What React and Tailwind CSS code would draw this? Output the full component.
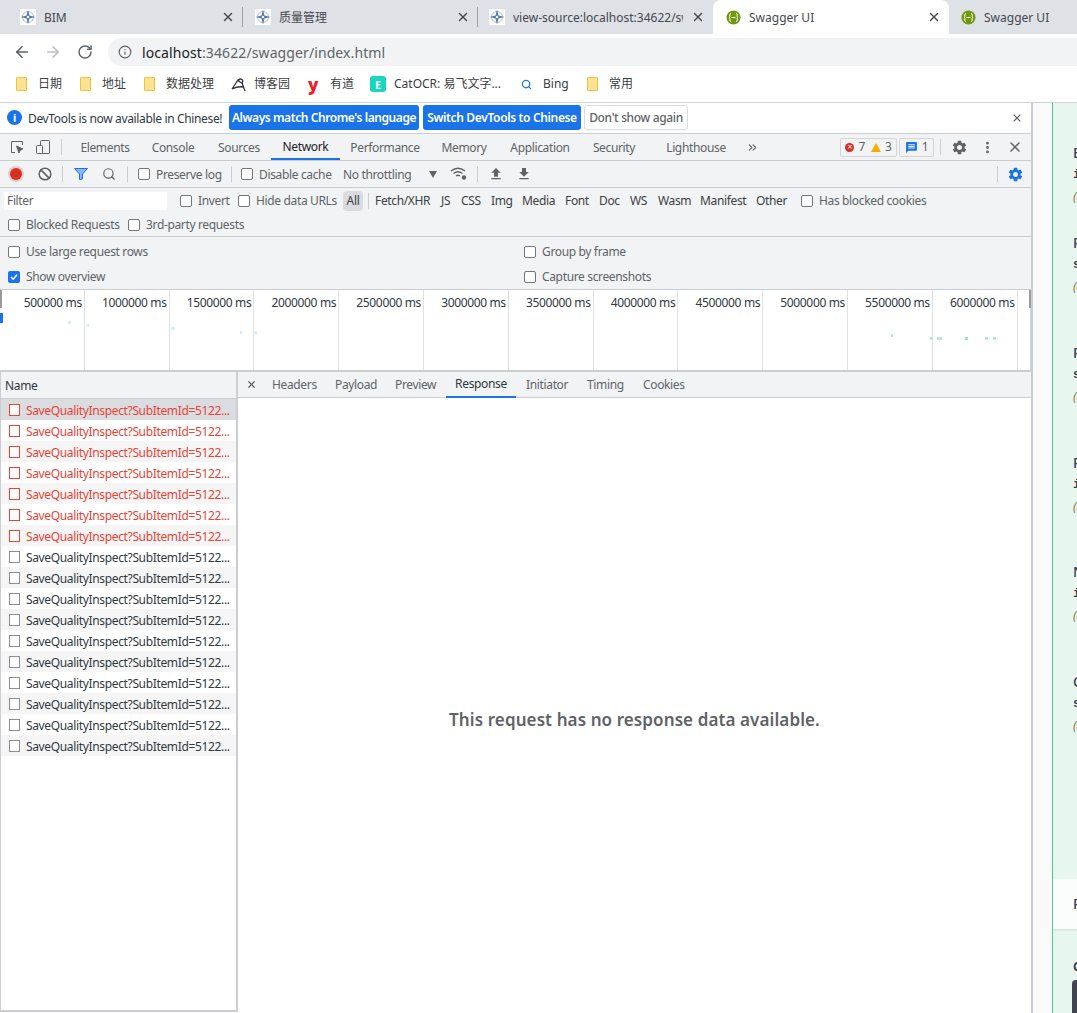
import { ArrowLeft, ArrowRight, RotateCw, Info, X, Search, Ban, ChevronsRight, EllipsisVertical } from "lucide-react";
import { MdSettings, MdFileUpload, MdFileDownload, MdMessage } from "react-icons/md";

const sans = "font-['Noto_Sans','Noto_Sans_CJK_SC',sans-serif]";

function BimIcon() {
  return (
    <svg width="16" height="16" viewBox="0 0 16 16" className="shrink-0 bg-white">
      <circle cx="8" cy="8" r="5.5" fill="none" stroke="#a9b6cc" strokeWidth="1" />
      <path d="M8 0.5 L9.5 6.5 L15.5 8 L9.5 9.5 L8 15.5 L6.5 9.5 L0.5 8 L6.5 6.5 Z" fill="#5b7cae" />
      <circle cx="8" cy="8" r="1.2" fill="#fff" />
    </svg>
  );
}

function SwaggerIcon() {
  return (
    <svg width="15" height="15" viewBox="0 0 15 15" className="shrink-0">
      <circle cx="7.5" cy="7.5" r="7" fill="#6f9a0e" />
      <path d="M5 3.5 Q3.8 3.5 3.8 5 V6.6 Q3.8 7.5 3 7.5 Q3.8 7.5 3.8 8.4 V10 Q3.8 11.5 5 11.5 M10 3.5 Q11.2 3.5 11.2 5 V6.6 Q11.2 7.5 12 7.5 Q11.2 7.5 11.2 8.4 V10 Q11.2 11.5 10 11.5 M5.5 7.5 H9.5" fill="none" stroke="#fff" strokeWidth="1" />
    </svg>
  );
}

function Tab({ icon, label, className, textClass = "w-[178px]", active }) {
  return (
    <div className={`flex h-[34px] shrink-0 items-center ${active ? "rounded-t-lg bg-white" : ""} ${className}`}>
      {icon}
      <span className={`overflow-hidden pt-px text-xs tracking-normal text-[#45494e] ${textClass}`}>{label}</span>
    </div>
  );
}

function TabStrip() {
  return (
    <div className="flex h-[34px] shrink-0 bg-[#dee1e6]">
      <Tab className="w-[243px] gap-2 pl-5" icon={<BimIcon />} label="BIM" />
      <X size={14} strokeWidth={2.4} className="ml-[-22px] mt-[10px] shrink-0 text-[#45494e]" />
      <div className="ml-[7px] mt-[7px] h-5 w-px shrink-0 bg-[#9aa0a6]" />
      <Tab className="ml-[12px] w-[201px] gap-2" textClass="w-[170px]" icon={<BimIcon />} label="质量管理" />
      <X size={14} strokeWidth={2.4} className="mt-[10px] shrink-0 text-[#45494e]" />
      <div className="ml-[7px] mt-[7px] h-5 w-px shrink-0 bg-[#9aa0a6]" />
      <Tab className="ml-[11px] w-[202px] gap-2" textClass="w-[170px]" icon={<BimIcon />} label="view-source:localhost:34622/swagger/index.html" />
      <X size={14} strokeWidth={2.4} className="mt-[10px] shrink-0 text-[#45494e]" />
      <Tab active className="ml-[8px] w-[236px] gap-2 pl-[13px]" textClass="w-[160px]" icon={<SwaggerIcon />} label="Swagger UI" />
      <X size={14} strokeWidth={2.4} className="ml-[-22px] mt-[10px] shrink-0 text-[#45494e]" />
      <Tab className="ml-[20px] w-[110px] gap-2" textClass="w-[80px]" icon={<SwaggerIcon />} label="Swagger UI" />
    </div>
  );
}

function Omnibox() {
  return (
    <div className="flex h-[34px] shrink-0 items-center bg-white pt-[2px]">
      <ArrowLeft size={18} strokeWidth={2.2} className="ml-[13px] text-[#5f6368]" />
      <ArrowRight size={18} strokeWidth={2.2} className="ml-[13px] text-[#bdc1c6]" />
      <RotateCw size={16} strokeWidth={2.2} className="ml-[15px] text-[#5f6368]" />
      <div className="ml-[15px] flex h-7 w-[970px] items-center rounded-l-[14px] bg-[#f1f3f4] pl-[10px]">
        <Info size={14} strokeWidth={2} className="text-[#5f6368]" />
        <span className="ml-[10px] text-[14px] tracking-[0.1px] text-[#202124]">localhost<span className="text-[#5f6368]">:34622/swagger/index.html</span></span>
      </div>
    </div>
  );
}

function Folder() {
  return <div className="h-[14px] w-[11px] shrink-0 rounded-[1px] border border-[#f0c040] bg-[#fde293]" />;
}

function Bookmark({ icon, label, className }) {
  return (
    <div className={`flex shrink-0 items-center ${className}`}>
      {icon}
      <span className="text-xs tracking-normal text-[#3c4043]">{label}</span>
    </div>
  );
}

function Bookmarks() {
  return (
    <div className="flex h-[35px] shrink-0 items-center border-b border-[#d0d3d7] bg-white pb-[2px]">
      <Bookmark className="ml-4 w-[64px] gap-[11px]" icon={<Folder />} label="日期" />
      <Bookmark className="w-[64px] gap-[11px]" icon={<Folder />} label="地址" />
      <Bookmark className="w-[87px] gap-[11px]" icon={<Folder />} label="数据处理" />
      <Bookmark
        className="w-[77px] gap-[8px]"
        icon={
          <svg width="15" height="15" viewBox="0 0 15 15" className="shrink-0">
            <path d="M1 12 L5 6 Q7 2 10 2 Q13 3 11 6 L14 14 M1 12 Q7 9 12 10 M7 3 Q9 6 12 6" fill="none" stroke="#333" strokeWidth="1.3" />
          </svg>
        }
        label="博客园"
      />
      <Bookmark className="w-[62px] gap-[11px]" icon={<span className="w-[11px] text-[17px] font-black leading-none text-[#e8202a]">y</span>} label="有道" />
      <Bookmark
        className="w-[151px] gap-2"
        icon={<span className="flex h-4 w-4 shrink-0 items-center justify-center rounded-[3px] bg-[#17d6c0] text-[11px] font-bold leading-none text-white">E</span>}
        label="CatOCR: 易飞文字..."
      />
      <Bookmark className="w-[66px] gap-[11px]" icon={<Search size={11} strokeWidth={3} className="shrink-0 text-[#2a7bd0]" />} label="Bing" />
      <Bookmark className="gap-[11px]" icon={<Folder />} label="常用" />
    </div>
  );
}

function InfoBar() {
  return (
    <div className="flex h-[31px] shrink-0 items-center border-b border-[#cacdd1] bg-white pb-px">
      <div className="ml-[7px] flex h-[15px] w-[15px] items-center justify-center rounded-full bg-[#1a73e8] text-[11px] font-bold leading-none text-white">i</div>
      <span className="ml-[6px] w-[201px] pt-[2px] text-xs text-[#303942]">DevTools is now available in Chinese!</span>
      <div className="flex h-[25px] w-[190px] items-center justify-center rounded-[3px] bg-[#1a73e8] pt-px text-xs font-semibold tracking-[-0.42px] text-white">Always match Chrome's language</div>
      <div className="ml-1 flex h-[25px] w-[158px] items-center justify-center rounded-[3px] bg-[#1a73e8] pt-px text-xs font-semibold text-white">Switch DevTools to Chinese</div>
      <div className="ml-[3px] flex h-[25px] w-[104px] items-center justify-center rounded-[3px] border border-[#dadce0] bg-white pt-px text-xs font-medium text-[#5f6368]">Don't show again</div>
      <X size={12} strokeWidth={2.2} className="ml-[323px] text-[#5f6368]" />
    </div>
  );
}

function PanelTab({ label, className, active }) {
  return (
    <div className={`flex h-[26px] shrink-0 items-center justify-center pt-[2px] text-xs ${active ? "border-b-2 border-[#1a73e8] text-[#202124]" : "text-[#5f6368]"} ${className}`}>
      {label}
    </div>
  );
}

function Sep({ className }) {
  return <div className={`h-4 w-px shrink-0 bg-[#cacdd1] ${className}`} />;
}

function PanelTabs() {
  return (
    <div className="flex h-[27px] shrink-0 items-center border-b border-[#cacdd1] bg-[#f1f3f4]">
      <svg width="16" height="16" viewBox="0 0 16 16" className="ml-[9px] shrink-0 text-[#5f6368]" fill="none" stroke="currentColor">
        <path d="M6 13.5 H2.5 V2.5 H13.5 V6" />
        <path d="M7.5 7 L14 10 L11.2 11.2 L10 14 Z" fill="currentColor" />
      </svg>
      <svg width="16" height="16" viewBox="0 0 16 16" className="ml-[10px] shrink-0 text-[#5f6368]" fill="none" stroke="currentColor">
        <rect x="5.5" y="1.5" width="9" height="13" rx="1" />
        <rect x="1.5" y="6.5" width="6" height="8" fill="#f1f3f4" rx="1" />
      </svg>
      <Sep className="ml-[10px]" />
      <PanelTab label="Elements" className="ml-[9px] w-[68px]" />
      <PanelTab label="Console" className="w-[68px]" />
      <PanelTab label="Sources" className="w-[64px]" />
      <PanelTab label="Network" active className="w-[69px]" />
      <PanelTab label="Performance" className="w-[90px]" />
      <PanelTab label="Memory" className="w-[68px]" />
      <PanelTab label="Application" className="w-[84px]" />
      <PanelTab label="Security" className="w-[64px]" />
      <PanelTab label="Lighthouse" className="w-[100px]" />
      <ChevronsRight size={13} className="shrink-0 text-[#5f6368]" />
      <div className="ml-[81px] flex h-[19px] w-[57px] shrink-0 items-center justify-center gap-1 rounded-[2px] border border-[#d4d6d9] text-xs text-[#5f6368]">
        <span className="flex h-[9px] w-[9px] items-center justify-center rounded-full bg-[#d93025] text-[8px] leading-none text-white">×</span>7
        <svg width="10" height="9" viewBox="0 0 10 9" className="ml-[2px]"><path d="M5 0 L10 9 H0 Z" fill="#f9ab00" /></svg>3
      </div>
      <div className="ml-[2px] flex h-[19px] w-[35px] shrink-0 items-center justify-center gap-1 rounded-[2px] border border-[#d4d6d9] text-xs text-[#5f6368]">
        <MdMessage size={13} className="text-[#1a73e8]" />1
      </div>
      <Sep className="ml-[6px]" />
      <MdSettings size={17} className="ml-[10px] shrink-0 text-[#5f6368]" />
      <EllipsisVertical size={15} strokeWidth={2.6} className="ml-[12px] shrink-0 text-[#5f6368]" />
      <X size={16} strokeWidth={2.2} className="ml-[12px] shrink-0 text-[#5f6368]" />
    </div>
  );
}

function Check({ label, className, checked }) {
  return (
    <div className={`flex shrink-0 items-center gap-[6px] text-xs text-[#5f6368] ${className}`}>
      {checked ? (
        <span className="flex h-3 w-3 shrink-0 items-center justify-center rounded-[2px] bg-[#1a73e8]">
          <svg width="10" height="10" viewBox="0 0 10 10"><path d="M2 5 L4.2 7.2 L8 2.8" fill="none" stroke="#fff" strokeWidth="1.6" /></svg>
        </span>
      ) : (
        <span className="h-3 w-3 shrink-0 rounded-[2px] border border-[#767676] bg-white" />
      )}
      <span className="pt-px">{label}</span>
    </div>
  );
}

function NetToolbar() {
  return (
    <div className="flex h-[27px] shrink-0 items-center border-b border-[#cacdd1] bg-[#f1f3f4]">
      <span className="ml-[10px] h-3 w-3 shrink-0 rounded-full bg-[#d93025] ring-2 ring-[#d93025]/20" />
      <Ban size={14} strokeWidth={2.6} className="ml-[16px] shrink-0 text-[#5f6368]" />
      <Sep className="ml-[10px]" />
      <svg width="14" height="12" viewBox="0 0 14 12" className="ml-[11px] shrink-0">
        <path d="M0.5 0.5 H13.5 L8.5 6 V11 L5.5 11.5 V6 Z" fill="#8ab4f8" stroke="#1a73e8" />
      </svg>
      <Search size={14} strokeWidth={2} className="ml-[14px] shrink-0 text-[#5f6368]" />
      <Sep className="ml-[11px]" />
      <Check label="Preserve log" className="ml-[10px] w-[93px]" />
      <Sep />
      <Check label="Disable cache" className="ml-[9px] w-[102px]" />
      <span className="w-[86px] shrink-0 pt-px text-xs text-[#5f6368]">No throttling</span>
      <span className="h-0 w-0 shrink-0 border-x-[4px] border-t-[7px] border-x-transparent border-t-[#5f6368]" />
      <svg width="18" height="14" viewBox="0 0 18 14" className="ml-[13px] shrink-0" fill="none" stroke="#5f6368" strokeWidth="1.3">
        <path d="M1 4 Q8 -1.5 15 4 M3.5 6.5 Q8 3 12.5 6.5 M6 9 Q8 7.5 10 9" />
        <circle cx="14" cy="10.5" r="2.2" fill="#5f6368" stroke="none" />
      </svg>
      <Sep className="ml-[9px]" />
      <MdFileUpload size={16} className="ml-[10px] shrink-0 text-[#5f6368]" />
      <MdFileDownload size={16} className="ml-[12px] shrink-0 text-[#5f6368]" />
      <Sep className="ml-[465px]" />
      <MdSettings size={17} className="ml-[9px] shrink-0 text-[#1a73e8]" />
    </div>
  );
}

function FilterType({ label, className }) {
  return <span className={`shrink-0 pt-px text-xs text-[#3c4043] ${className}`}>{label}</span>;
}

function FilterBar() {
  return (
    <div className="flex h-[49px] shrink-0 flex-col border-b border-[#cacdd1] bg-[#f1f3f4]">
      <div className="flex h-[25px] shrink-0 items-center">
        <div className="ml-[4px] flex h-[18px] w-[163px] shrink-0 items-center bg-white pl-[3px] text-xs text-[#5f6368]">Filter</div>
        <Check label="Invert" className="ml-[13px] w-[58px]" />
        <Check label="Hide data URLs" className="w-[105px]" />
        <span className="flex h-5 w-5 shrink-0 items-center justify-center rounded-[4px] bg-[#dadce0] text-xs text-[#3c4043]">All</span>
        <Sep className="ml-[5px]" />
        <FilterType label="Fetch/XHR" className="ml-[6px] w-[66px]" />
        <FilterType label="JS" className="w-[20px]" />
        <FilterType label="CSS" className="w-[30px]" />
        <FilterType label="Img" className="w-[31px]" />
        <FilterType label="Media" className="w-[43px]" />
        <FilterType label="Font" className="w-[34px]" />
        <FilterType label="Doc" className="w-[31px]" />
        <FilterType label="WS" className="w-[28px]" />
        <FilterType label="Wasm" className="w-[42px]" />
        <FilterType label="Manifest" className="w-[56px]" />
        <FilterType label="Other" className="w-[45px]" />
        <Check label="Has blocked cookies" />
      </div>
      <div className="flex h-[23px] shrink-0 items-center pl-2">
        <Check label="Blocked Requests" className="w-[120px]" />
        <Check label="3rd-party requests" />
      </div>
    </div>
  );
}

function SettingsPane() {
  return (
    <div className="grid h-[53px] shrink-0 grid-cols-[516px_1fr] items-center border-b border-[#cacdd1] bg-[#f1f3f4] pl-2 pt-[2px]">
      <Check label="Use large request rows" />
      <Check label="Group by frame" />
      <Check label="Show overview" checked />
      <Check label="Capture screenshots" />
    </div>
  );
}

const overviewLabels = ["500000", "1000000", "1500000", "2000000", "2500000", "3000000", "3500000", "4000000", "4500000", "5000000", "5500000", "6000000"];

function Overview() {
  return (
    <div className="relative flex h-[82px] shrink-0 border-b-2 border-[#cacdd1] bg-white">
      {overviewLabels.map((v) => (
        <div key={v} className="h-full w-[84.8px] shrink-0 border-r border-[#e0e1e3] pr-[2px] pt-[5px] text-right text-xs text-[#303942]">
          {v} ms
        </div>
      ))}
      {/* marks of the requests */}
      <svg width="1032" height="80" className="absolute left-0 top-0">
        <rect x="0" y="23" width="3" height="10" fill="#1a73e8" />
        <rect x="68" y="31" width="3" height="3" fill="#d7eef7" />
        <rect x="87" y="34" width="2" height="3" fill="#d7eef7" />
        <rect x="171" y="37" width="4" height="3" fill="#d7eef7" />
        <rect x="240" y="41" width="2" height="3" fill="#d7eef7" />
        <rect x="253" y="41" width="4" height="3" fill="#d7eef7" />
        <rect x="891" y="44" width="2" height="3" fill="#b5e4ec" />
        <rect x="930" y="47" width="3" height="3" fill="#b5e8d8" />
        <rect x="937" y="47" width="5" height="3" fill="#b5e8d8" />
        <rect x="965" y="47" width="3" height="3" fill="#a0e4cc" />
        <rect x="985" y="47" width="3" height="3" fill="#b5e8d8" />
        <rect x="993" y="47" width="3" height="3" fill="#b5e8d8" />
        <rect x="0" y="0" width="2" height="18" fill="#9a9a9a" />
        <rect x="1029" y="0" width="2" height="18" fill="#9a9a9a" />
        <rect x="1030" y="18" width="1" height="62" fill="#c8d8f4" />
      </svg>
    </div>
  );
}

const rows = Array.from({ length: 17 }, (_, i) => i);

function RequestRow({ index }) {
  const failed = index < 7;
  const bg = index === 0 ? "bg-[#dadce0]" : index % 2 === 0 ? "bg-[#f5f5f5]" : "bg-white";
  return (
    <div className={`flex h-[21px] shrink-0 items-center pl-[8px] text-xs ${bg} ${failed ? "text-[#ea4335]" : "text-[#303942]"}`}>
      <span className={`h-[12px] w-[11px] shrink-0 border bg-white ${failed ? "border-[#ea4335]" : "border-[#8a8d91]"}`} />
      <span className="ml-[6px] pt-[2px]">SaveQualityInspect?SubItemId=5122...</span>
    </div>
  );
}

function RequestList() {
  return (
    <div className="flex h-[640px] w-[238px] shrink-0 flex-col border-x-[1px] border-b-2 border-r-[2px] border-[#cacdd1] bg-white">
      <div className="flex h-[27px] shrink-0 items-center border-b border-[#cacdd1] bg-[#f1f3f4] pl-[4px] pt-[2px] text-xs text-[#303942]">Name</div>
      {rows.map((i) => <RequestRow key={i} index={i} />)}
    </div>
  );
}

function DetailTab({ label, className, active }) {
  return (
    <div className={`flex h-[26px] shrink-0 items-center pt-[1px] text-xs ${active ? "justify-center border-b-2 border-[#1a73e8] text-[#303942]" : "text-[#5f6368]"} ${className}`}>
      {label}
    </div>
  );
}

function Detail() {
  return (
    <div className="flex min-w-0 flex-1 flex-col bg-white">
      <div className="flex h-[26px] shrink-0 items-center border-b border-[#cacdd1] bg-[#f1f3f4]">
        <X size={11} strokeWidth={2.6} className="ml-[8px] shrink-0 text-[#5f6368]" />
        <DetailTab label="Headers" className="ml-[15px] w-[63px]" />
        <DetailTab label="Payload" className="w-[60px]" />
        <DetailTab label="Preview" className="w-[51px]" />
        <DetailTab label="Response" active className="w-[70px]" />
        <DetailTab label="Initiator" className="ml-[10px] w-[61px]" />
        <DetailTab label="Timing" className="w-[56px]" />
        <DetailTab label="Cookies" className="w-[57px]" />
      </div>
      <div className="flex flex-1 items-center justify-center pt-[29px] text-[17px] font-semibold tracking-[0.1px] text-[#5f6368]">
        This request has no response data available.
      </div>
    </div>
  );
}

const params = [
  { name: "BatchNo", type: "integer", cls: "h-[90px]" },
  { name: "ProjectName", type: "string", cls: "h-[110px]" },
  { name: "ProjectId", type: "string", cls: "h-[110px]" },
  { name: "PartId", type: "integer", cls: "h-[109px]" },
  { name: "Number", type: "integer", cls: "h-[110px]" },
  { name: "Code", type: "string", cls: "h-[208px]" },
];

function PagePeek() {
  return (
    <div className="flex min-w-0 flex-1 bg-[#fafafa] pl-[19px]">
      <div className="flex w-[25px] shrink-0 flex-col overflow-hidden border-l-[1.5px] border-[#49cc90] bg-[#e8f6f0]">
        <div className="w-[200px] shrink-0 pl-[20px] pt-[40px]">
          {params.map((p) => (
            <div key={p.name} className={`flex flex-col ${p.cls}`}>
              <span className="h-5 text-sm font-medium leading-5 text-[#3b4151]">{p.name}</span>
              <span className="mt-[2px] h-5 font-['Liberation_Mono',monospace] text-xs font-bold leading-5 text-[#3b4151]">{p.type}</span>
              <span className="mt-[2px] h-5 text-xs italic leading-5 text-[#8b7355]">(query)</span>
            </div>
          ))}
        </div>
        <div className="mt-[-1px] flex h-[50px] w-[200px] shrink-0 items-center bg-[#fbfdfc] pl-[20px] text-sm font-medium text-[#3b4151] shadow-[0_1px_2px_rgba(0,0,0,0.1)]">Responses</div>
        <div className="ml-[20px] mt-[29px] h-[18px] w-[100px] shrink-0 text-xs font-bold leading-[18px] text-[#3b4151]">Curl</div>
        <div className="ml-[19px] mt-[4px] h-[40px] w-[100px] shrink-0 rounded-[4px] bg-[#41444e]" />
      </div>
    </div>
  );
}

export default function App() {
  return (
    <div className={`flex h-[1013px] w-[1077px] flex-col overflow-hidden whitespace-nowrap bg-white tracking-[-0.35px] ${sans}`}>
      <TabStrip />
      <Omnibox />
      <Bookmarks />
      <div className="flex min-h-0 flex-1">
        <div className="flex w-[1033px] shrink-0 flex-col border-r-2 border-[#cacdd1] bg-white">
          <InfoBar />
          <PanelTabs />
          <NetToolbar />
          <FilterBar />
          <SettingsPane />
          <Overview />
          <div className="flex min-h-0 flex-1">
            <RequestList />
            <Detail />
          </div>
        </div>
        <PagePeek />
      </div>
    </div>
  );
}
